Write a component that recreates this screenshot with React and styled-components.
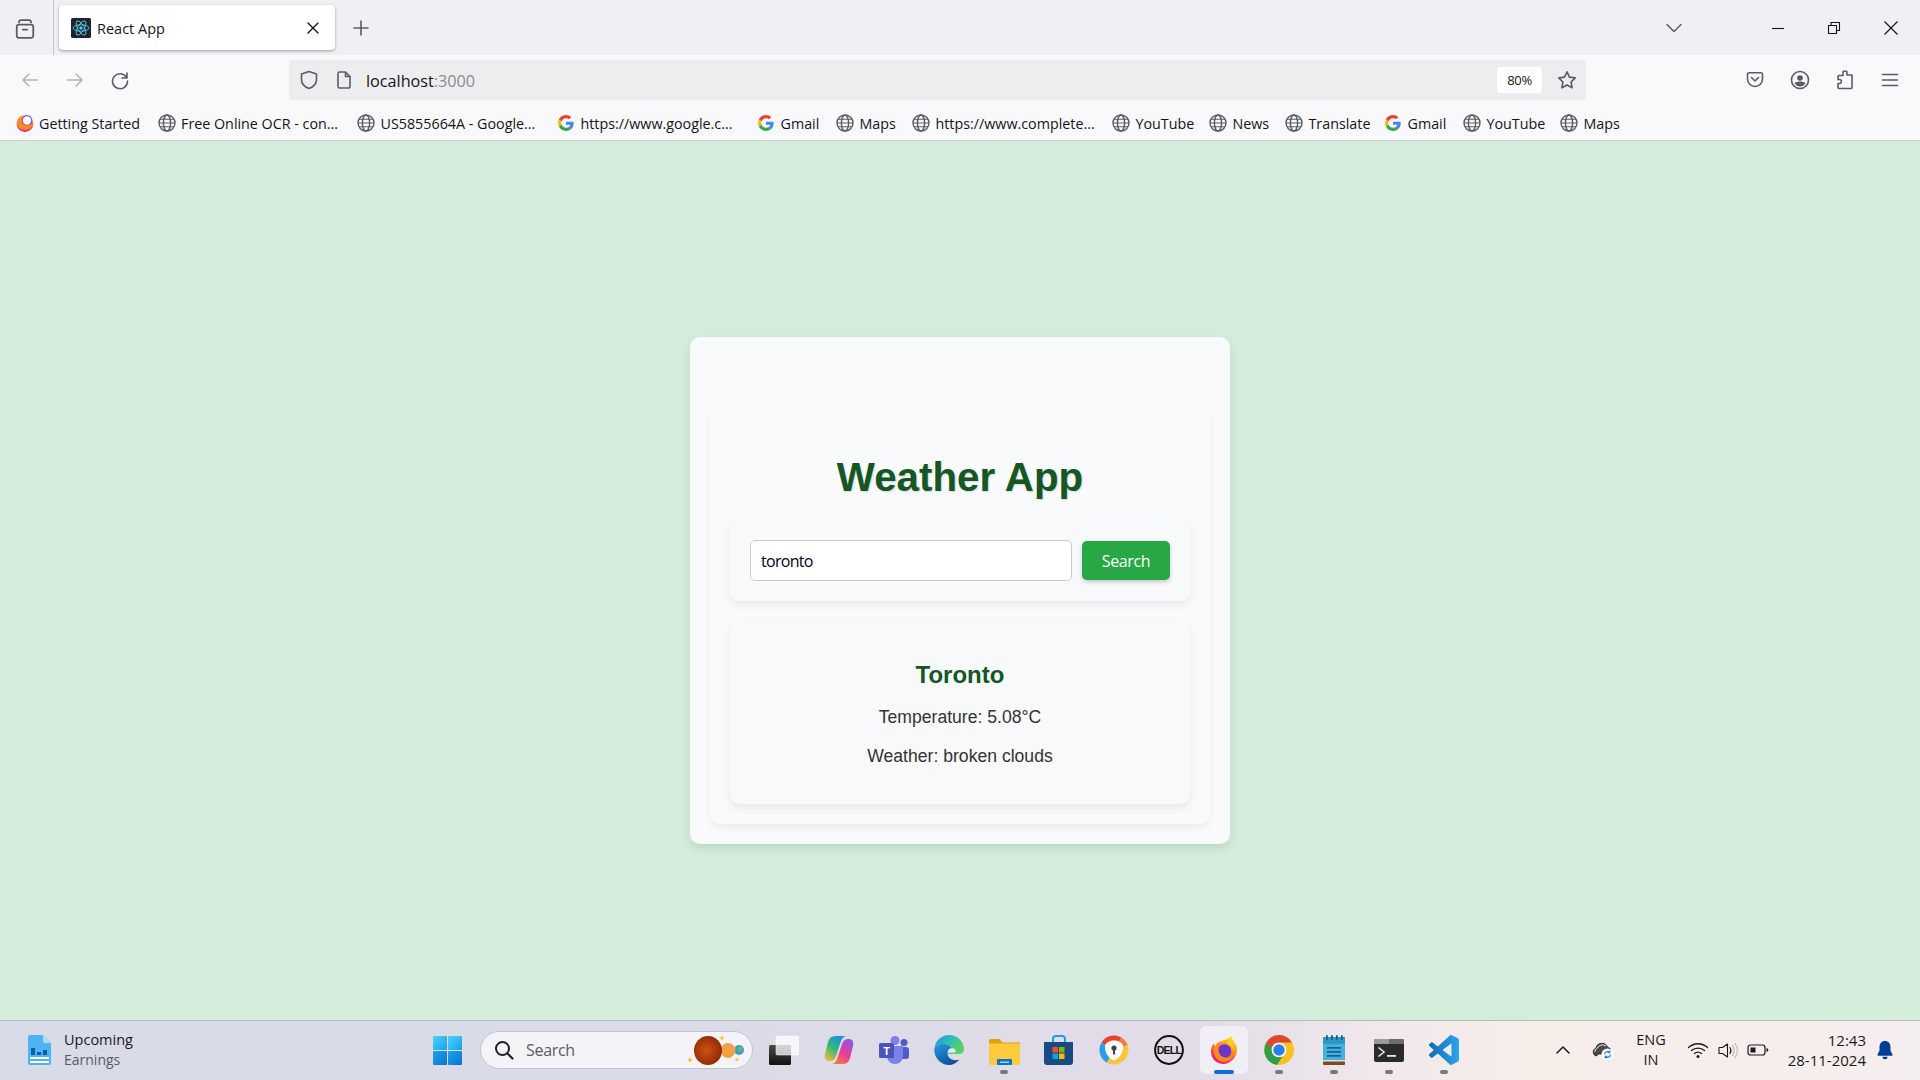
import React from "react";
import styled, { createGlobalStyle } from "styled-components";

const UI = `"Open Sans", "Noto Sans", sans-serif`;
const ARIAL = `"Liberation Sans", Arial, sans-serif`;

const Global = createGlobalStyle`
  html, body { margin: 0; padding: 0; height: 100%; overflow: hidden; }
  #root { height: 100%; }
  * { box-sizing: border-box; }
`;

const Screen = styled.div`
  width: 1920px; height: 1080px; display: flex; flex-direction: column;
  background: #d4edda; font-family: ${UI}; overflow: hidden;
`;
const TabStrip = styled.div`
  height: 55px; flex: none; display: flex; align-items: stretch; background: #f0f0f4;
`;
const TabsButton = styled.div`
  width: 54px; display: flex; align-items: center; justify-content: center;
  border-right: 1px solid #c6c6cc; padding: 2px 4px 0 0;
`;
const Tab = styled.div`
  width: 276px; height: 45px; margin: 5px 0 0 5px; padding: 1px 15px 0 12px;
  display: flex; align-items: center; background: #fff; border-radius: 4px;
  box-shadow: 0 1px 3px rgba(0,0,0,.35);
`;
const TabTitle = styled.span`
  flex: 1; margin-left: 6px; font-size: 14.5px; letter-spacing: 0; color: #15141a;
`;
const Slot = styled.div`
  width: ${p => p.$w}px; flex: none; display: flex; align-items: center; justify-content: center;
`;
const StripSlot = styled(Slot)` padding-top: 1px; `;
const Spacer = styled.div` flex: 1; `;
const NavBar = styled.div`
  height: 45px; flex: none; padding: 5px 7.5px 0; display: flex; align-items: flex-start; background: #f9f9fb;
`;
const NavSlot = styled(Slot)` height: 40px; `;
const UrlBar = styled.div`
  width: 1297px; height: 40px; flex: none; margin-left: 146.5px; padding: 0 9px 0 10px;
  background: #ededf0; border-radius: 4px; display: flex; align-items: center;
`;
const UrlText = styled.div`
  flex: 1; margin-left: 14px; font-size: 16.2px; letter-spacing: 0; color: #15141a; padding-top: 2px;
  span { color: #8a8a90; }
`;
const ZoomBadge = styled.div`
  width: 45px; height: 26px; background: #fff; border-radius: 3px; margin-right: 15px;
  display: flex; align-items: center; justify-content: center; font-size: 13px; letter-spacing: -0.3px; color: #15141a;
`;
const Bookmarks = styled.div`
  height: 41px; flex: none; padding: 6px 0 0 15.5px; display: flex; align-items: center;
  background: #f9f9fb; border-bottom: 1px solid #c9cbc9;
`;
const Bookmark = styled.div`
  width: ${p => p.$w}px; flex: none; display: flex; align-items: center; gap: 5.5px;
  font-size: 14.3px; letter-spacing: 0; color: #15141a; white-space: nowrap;
`;
const Main = styled.main`
  flex: 1; display: flex; align-items: center; justify-content: center; padding-top: 20px; background: #d4edda;
`;
const Outer = styled.div`
  width: 540px; padding: 70px 20px 20px; background: #f9fafc; border-radius: 10px;
  box-shadow: 0 4px 8px rgba(0,0,0,.1);
`;
const Inner = styled.div`
  padding: 20px; background: #f9fafc; border-radius: 10px; box-shadow: 0 4px 8px rgba(0,0,0,.06);
`;
const Title = styled.h1`
  margin: 28px 0 19px; text-align: center; font: bold 40.3px/46px ${ARIAL}; color: #155724;
  text-shadow: 1px 1px 2px rgba(0,0,0,.15);
`;
const SearchBox = styled.form`
  height: 81px; padding: 20px; display: flex; align-items: center; gap: 10px;
  background: #f8f9fb; border-radius: 10px; box-shadow: 0 4px 8px rgba(0,0,0,.07);
`;
const CityInput = styled.input`
  width: 322px; height: 41px; padding: 0 10px; border: 1px solid #ccc; border-radius: 5px;
  background: #fff; font: 16px ${UI}; letter-spacing: -0.7px; color: #00001a; outline: none;
`;
const SearchButton = styled.button`
  width: 88px; height: 39px; border: 0; border-radius: 5px; background: #28a745; color: #fff;
  font: 16px ${UI}; letter-spacing: -0.35px; box-shadow: 0 2px 4px rgba(0,0,0,.2); padding: 0;
`;
const Result = styled.section`
  height: 183px; margin-top: 20px; padding-top: 40px; text-align: center;
  background: #f8f9fb; border-radius: 10px; box-shadow: 0 4px 8px rgba(0,0,0,.08);
`;
const City = styled.h2`
  margin: 0 0 18px; font: bold 24px/28px ${ARIAL}; color: #155724;
`;
const Reading = styled.p`
  margin: 0 0 18px; font: 17.6px/21px ${ARIAL}; color: #333;
`;
const Taskbar = styled.footer`
  height: 60px; flex: none; padding-bottom: 1px; display: flex; align-items: center; border-top: 1px solid #b8b8c2;
  background: linear-gradient(90deg, #d9dbe8 0%, #dadbe8 35%, #e2dce8 62%, #f0e8ea 72%, #f7eeea 80%, #f5eeee 100%);
`;
const Widget = styled.div`
  width: 433px; flex: none; padding-left: 28px; display: flex; align-items: center; gap: 13px;
`;
const WidgetText = styled.div`
  display: flex; flex-direction: column; font-size: 14.5px; line-height: 20px; color: #1a1a1a;
  small { font-size: 14px; color: #5a5a60; }
`;
const SearchPill = styled.div`
  width: 273px; height: 38px; margin: 0 3.5px 0 18px; flex: none; padding: 0 8px 0 13px; display: flex; align-items: center;
  background: #f3f3f8; border: 1px solid #c4c4cf; border-radius: 19px; font-size: 16px; letter-spacing: -0.3px; color: #5c5c60;
`;
const PillLabel = styled.span` flex: 1; margin-left: 12px; `;
const AppCell = styled.div`
  position: relative; width: 55px; height: 58px; flex: none; display: flex; align-items: center; justify-content: center;
  &::before {
    content: ""; position: absolute; left: 3.5px; right: 3.5px; top: 5px; bottom: 5px; border-radius: 5px;
    background: ${p => (p.$active ? "#f1eff6" : "transparent")};
    box-shadow: ${p => (p.$active ? "0 0 1px rgba(0,0,0,.15)" : "none")};
  }
  svg { position: relative; }
  &::after {
    content: ""; position: absolute; bottom: 5px; left: 50%; transform: translateX(-50%); height: 4px; border-radius: 2px;
    width: ${p => (p.$active ? 20 : p.$open ? 8 : 0)}px;
    background: ${p => (p.$active ? "#0f6cd8" : "#77777d")};
  }
`;
const Tray = styled.div`
  margin-left: auto; padding-right: 16px; display: flex; align-items: center; color: #1a1a1a;
`;
const Lang = styled.div`
  width: 56px; margin-right: 4px; text-align: center; font-size: 14.5px; line-height: 20px; flex: none;
`;
const Clock = styled.div`
  width: 93px; flex: none; text-align: right; font-size: 15px; line-height: 20px; white-space: nowrap;
`;

const I = ({ s = 20, w, h, vb = "0 0 20 20", children, ...r }) => (
  <svg width={w ?? s} height={h ?? s} viewBox={vb} fill="none" {...r}>{children}</svg>
);
const ST = { stroke: "#5b5b66", strokeWidth: 1.6, strokeLinecap: "round", strokeLinejoin: "round" };

const Globe = () => (
  <I s={18} vb="0 0 18 18" style={{ flex: "none" }}>
    <g stroke="#5b5b66" strokeWidth="1.4">
      <circle cx="9" cy="9" r="8" />
      <ellipse cx="9" cy="9" rx="3.6" ry="8" />
      <path d="M1 9h16M2 5.2h14M2 12.8h14" strokeWidth="1.1" />
    </g>
  </I>
);
const G = ({ s = 16 }) => (
  <span style={{ width: 18, display: "flex", justifyContent: "center", flex: "none" }}>
    <svg width={s} height={s} viewBox="0 0 48 48">
      <path fill="#EA4335" d="M24 9.5c3.54 0 6.71 1.22 9.21 3.6l6.85-6.85C35.9 2.38 30.47 0 24 0 14.62 0 6.51 5.38 2.56 13.22l7.98 6.19C12.43 13.72 17.74 9.5 24 9.5z" />
      <path fill="#4285F4" d="M46.98 24.55c0-1.57-.15-3.09-.38-4.55H24v9.02h12.94c-.58 2.96-2.26 5.48-4.78 7.18l7.73 6c4.51-4.18 7.09-10.36 7.09-17.65z" />
      <path fill="#FBBC05" d="M10.53 28.59c-.48-1.45-.76-2.99-.76-4.59s.27-3.14.76-4.59l-7.98-6.19C.92 16.46 0 20.12 0 24c0 3.88.92 7.54 2.56 10.78l7.97-6.19z" />
      <path fill="#34A853" d="M24 48c6.48 0 11.93-2.13 15.89-5.81l-7.73-6c-2.15 1.45-4.92 2.3-8.16 2.3-6.26 0-11.57-4.22-13.47-9.91l-7.98 6.19C6.51 42.62 14.62 48 24 48z" />
    </svg>
  </span>
);
const FoxSmall = () => (
  <I s={18} vb="0 0 18 18" style={{ flex: "none" }}>
    <defs>
      <linearGradient id="fs" x1=".7" y1="0" x2=".3" y2="1">
        <stop offset="0" stopColor="#ffb21f" /><stop offset=".55" stopColor="#ff5a3c" /><stop offset="1" stopColor="#e3157f" />
      </linearGradient>
    </defs>
    <circle cx="9" cy="9.600" r="8.400" fill="url(#fs)" />
    <circle cx="11" cy="6.500" r="4.800" fill="#fff" stroke="#8a4be0" strokeWidth="1.200" />
    <path fill="#ff8a1f" d="M1 8c1-3 3.500-5 6-5-1 1.500-1.500 3-1 5 .6 2 2.500 3.500 5 3.500 2 0 4-1 5.500-2.500-.8 4.500-4 7-7.500 7C4 16 .5 12.500 1 8z" />
  </I>
);
const Fox = ({ s = 30, id = "fx" }) => (
  <svg width={s} height={s} viewBox="0 0 30 30" style={{ flex: "none" }}>
    <defs>
      <linearGradient id={id} x1="0.7" y1="0" x2="0.2" y2="1">
        <stop offset="0" stopColor="#ffe226" /><stop offset="0.4" stopColor="#ff8a1f" /><stop offset="0.8" stopColor="#f5256a" /><stop offset="1" stopColor="#e31587" />
      </linearGradient>
    </defs>
    <path fill={`url(#${id})`} d="M22 1c1 3 4 6 5.4 10 1.2 3.800.6 8-1.800 11.600-2.500 3.600-6.400 6.400-11 6.400C7.600 29 2 23.500 2 16.500 2 13 3.200 10 5 8c0 1.500.5 2.500 1.300 3.300C7 9 8.800 7.300 11 6.500 14 5.400 18.500 5 22 1z" />
    <circle cx="15.500" cy="16" r="6.800" fill="#6d34c9" />
    <path fill="#ff8a1f" d="M4 13c2-3 6-5 10-4.500-2.500 1-4.200 2.500-4.500 5C9 18 12 22.500 17 22.700c3.500.1 6.500-2 7.500-5-.3 5-4.300 9.300-10 9.300C8.500 27 3.600 20 4 13z" />
    <path fill="#ffd426" d="M20.500 5c2.500 2.300 4.500 6 3.800 10.500-.8-3.500-3-6-6.500-7.800 1.500-.4 2.300-1.300 2.700-2.700z" />
  </svg>
);

const React_ = () => (
  <I s={20} vb="0 0 20 20" style={{ flex: "none" }}>
    <rect width="20" height="20" rx="1.500" fill="#20232a" />
    <g stroke="#61dafb" strokeWidth=".8" fill="none">
      <ellipse cx="10" cy="10" rx="8" ry="3.200" />
      <ellipse cx="10" cy="10" rx="8" ry="3.200" transform="rotate(60 10 10)" />
      <ellipse cx="10" cy="10" rx="8" ry="3.200" transform="rotate(120 10 10)" />
    </g>
    <circle cx="10" cy="10" r="1.600" fill="#61dafb" />
  </I>
);

const TaskView = () => (
  <I s={30} vb="0 0 30 30">
    <defs>
      <linearGradient id="tv" x1="0" y1="0" x2="0" y2="1"><stop offset="0" stopColor="#4a4a4a" /><stop offset="1" stopColor="#111" /></linearGradient>
    </defs>
    <rect x="0" y="10" width="22" height="20" rx="1.500" fill="url(#tv)" />
    <rect x="7" y="1" width="23" height="19" rx="1.500" fill="#fff" fillOpacity=".75" stroke="#fff" strokeOpacity=".5" />
  </I>
);
const Copilot = () => (
  <I s={30} vb="0 0 30 30">
    <defs>
      <linearGradient id="c1" x1=".8" y1="0" x2=".1" y2="1"><stop offset="0" stopColor="#1f86f0" /><stop offset=".5" stopColor="#2fb87a" /><stop offset="1" stopColor="#f3bd2c" /></linearGradient>
      <linearGradient id="c2" x1=".8" y1="0" x2=".2" y2="1"><stop offset="0" stopColor="#8f55e6" /><stop offset=".55" stopColor="#e93f95" /><stop offset="1" stopColor="#f9802a" /></linearGradient>
    </defs>
    <path fill="url(#c2)" d="M19.500 29H7c3 0 5-2 6-5l5-15c1-3 3-5 7-5 3.500 0 5 3 4 7l-3 12c-1 4-3.500 6-7.500 6z" />
    <path fill="url(#c1)" d="M10.500 1H23c-3 0-5 2-6 5l-5 15c-1 3-3 5-7 5-3.500 0-5-3-4-7l3-12c1-4 3.500-6 7.500-6z" />
  </I>
);
const Teams = () => (
  <I s={30} vb="0 0 30 30">
    <circle cx="25" cy="7.500" r="3.500" fill="#5059c9" />
    <rect x="20" y="12" width="10" height="12" rx="3" fill="#5059c9" />
    <circle cx="16" cy="5.500" r="4.500" fill="#7b83eb" />
    <path fill="#7b83eb" d="M8 11h16v10c0 4.500-3.500 8-8 8s-8-3.500-8-8z" />
    <rect x="0" y="8" width="15" height="15" rx="1.500" fill="#4b53bc" />
    <text x="7.500" y="19.500" textAnchor="middle" fill="#fff" fontFamily={ARIAL} fontWeight="700" fontSize="11">T</text>
  </I>
);
const Edge = () => (
  <I s={30} vb="0 0 30 30">
    <defs>
      <linearGradient id="e1" x1=".1" y1=".1" x2="1" y2=".7"><stop offset="0" stopColor="#1b9de2" /><stop offset=".5" stopColor="#35c1a8" /><stop offset="1" stopColor="#5fd35a" /></linearGradient>
      <linearGradient id="e2" x1="0" y1="0" x2=".6" y2="1"><stop offset="0" stopColor="#2b9be0" /><stop offset="1" stopColor="#0b4f9c" /></linearGradient>
    </defs>
    <path fill="url(#e1)" d="M15 0c8.500 0 15 6.500 15 14.500 0 3-2 4.500-5 4.500H13.500c-.5-3 1-5.500 4-6C13 7 4 8 .5 13 1.500 5.500 7.500 0 15 0z" />
    <path fill="url(#e2)" d="M.5 13C4 8 13 7 17.500 13c-3 .5-4.500 3-4 6 .8 5 6.500 7.500 12 5.500-3 3.500-6.500 5.500-10.500 5.500C7 30-1 22 .5 13z" />
    <path fill="#e4e8f2" d="M14.300 15.500c.8-1.800 3.700-2.700 6-1.800 1.600.7 2 2.200 1 3.200-.8.700-2 .9-3.800.9h-3.700c-.1-.8.100-1.500.5-2.300z" />
  </I>
);
const Files = () => (
  <I s={31} vb="0 0 31 31">
    <path fill="#dda30c" d="M0 5.500C0 4.700.7 4 1.500 4h9l3 3.500H31v4H0z" />
    <path fill="#ffcb3d" d="M0 8.500h31V28a2 2 0 0 1-2 2H2a2 2 0 0 1-2-2z" />
    <rect x="8" y="24" width="15" height="6" rx="1" fill="#0a76c8" />
    <rect x="11" y="26.500" width="9" height="1.500" fill="#9fd3f7" />
  </I>
);
const Store = () => (
  <I s={30} vb="0 0 30 30">
    <path d="M9 8V4a3 3 0 0 1 3-3h6a3 3 0 0 1 3 3v4" stroke="#1ba0e2" strokeWidth="2" />
    <path fill="#1a4a83" d="M0 7h29v20a3 3 0 0 1-3 3H3a3 3 0 0 1-3-3z" />
    <rect x="8.500" y="12" width="5.500" height="5.500" fill="#f25022" />
    <rect x="15" y="12" width="5.500" height="5.500" fill="#7fba00" />
    <rect x="8.500" y="18.500" width="5.500" height="5.500" fill="#00a4ef" />
    <rect x="15" y="18.500" width="5.500" height="5.500" fill="#ffb900" />
  </I>
);
const Shield2 = () => (
  <I s={30} vb="0 0 30 30">
    <circle cx="15" cy="15" r="11.500" stroke="#f8c53e" strokeWidth="6" />
    <path d="M5.040 9.250A11.500 11.500 0 0 1 20.750 5.040" stroke="#e8402f" strokeWidth="6" />
    <path d="M9.250 24.960A11.500 11.500 0 0 1 5.040 9.250" stroke="#2a9bef" strokeWidth="6" />
    <path d="M20.750 5.040A11.500 11.500 0 0 1 25.700 11" stroke="#ee7d4a" strokeWidth="6" />
    <path fill="#fff" d="M15 5.500c4 0 8 2 9 5 .5 6-3.500 13-9 15-5.500-2-9.500-9-9-15 1-3 5-5 9-5z" />
    <circle cx="15" cy="13" r="2.600" fill="#3d4350" />
    <rect x="14" y="13.500" width="2" height="6" fill="#3d4350" />
  </I>
);
const Dell = () => (
  <I s={30} vb="0 0 30 30">
    <circle cx="15" cy="15" r="13.900" fill="none" stroke="#111" strokeWidth="2" />
    <text x="15" y="18.700" textAnchor="middle" fontFamily={ARIAL} fontWeight="700" fontSize="10.500" letterSpacing="-.7" fill="#111">DELL</text>
  </I>
);
const Chrome = () => (
  <I s={30} vb="0 0 30 30">
    <circle cx="15" cy="15" r="15" fill="#f9c220" />
    <path fill="#dd4535" d="M15 0a15 15 0 0 1 13 7.500H15a7.500 7.500 0 0 0-7.200 5.300L2.200 7.800A15 15 0 0 1 15 0z" />
    <path fill="#2e9f49" d="M2.200 7.800A15 15 0 0 0 13 29.900l5.500-8.700a7.500 7.500 0 0 1-10.700-8.400z" />
    <circle cx="15" cy="15" r="7.300" fill="#fff" />
    <circle cx="15" cy="15" r="5.700" fill="#2f7de8" />
  </I>
);
const Notepad = () => (
  <I w={22} h={30} vb="0 0 22 30">
    <rect x="0" y="2" width="22" height="26" rx="1" fill="#45b0dd" />
    <rect x="0" y="2" width="22" height="7" fill="#2f96c8" />
    <rect x="0" y="26" width="22" height="4" rx="1" fill="#7b4a2c" />
    <rect x="0" y="25" width="22" height="1.500" fill="#e9e0d0" />
    {[3, 8, 13, 18].map(x => <rect key={x} x={x} y="0" width="1.800" height="5" rx=".9" fill="#12608c" />)}
    {[12, 16, 20].map(y => <rect key={y} x="4" y={y} width="14" height="1.700" fill="#14638f" />)}
  </I>
);
const Terminal = () => (
  <I w={30} h={23} vb="0 0 30 23">
    <rect width="30" height="23" rx="2" fill="#2b2b2b" />
    <path d="M0 2a2 2 0 0 1 2-2h13v5H0z" fill="#9a9a9a" />
    <path d="M15 0h13a2 2 0 0 1 2 2v3H15z" fill="#6d6d6d" />
    <path d="M4.500 8.500l5.500 4.500-5.500 4.500" stroke="#e6e6e6" strokeWidth="1.600" fill="none" />
    <rect x="13" y="16" width="9" height="1.800" fill="#e6e6e6" />
  </I>
);
const VSCode = () => (
  <I s={30} vb="0 0 100 100">
    <defs><linearGradient id="vs" x1="0" y1="0" x2="1" y2="0"><stop offset="0" stopColor="#0e6db4" /><stop offset="1" stopColor="#2aa5ee" /></linearGradient></defs>
    <path fillRule="evenodd" fill="url(#vs)" d="M96.400 10.800 75.800.9a6.200 6.200 0 0 0-7.100 1.200L29.400 38 12.200 25a4.200 4.200 0 0 0-5.300.2l-5.500 5a4.200 4.200 0 0 0 0 6.200L16.200 50 1.400 63.600a4.200 4.200 0 0 0 0 6.200l5.500 5a4.200 4.200 0 0 0 5.300.2l17.200-13 39.300 35.900a6.200 6.200 0 0 0 7.100 1.200l20.600-9.900a6.200 6.200 0 0 0 3.500-5.600V16.400a6.200 6.200 0 0 0-3.500-5.600zM75 72.700 45.200 50 75 27.300z" />
  </I>
);
const WinLogo = () => (
  <I s={29} vb="0 0 29 29" style={{ flex: "none" }}>
    <defs>
      <linearGradient id="w1" x1="0" y1="0" x2="1" y2="1"><stop offset="0" stopColor="#4dd3f7" /><stop offset="1" stopColor="#18a0e8" /></linearGradient>
      <linearGradient id="w2" x1="0" y1="0" x2="1" y2="1"><stop offset="0" stopColor="#1ea4e8" /><stop offset="1" stopColor="#0a72d4" /></linearGradient>
    </defs>
    <rect x="0" y="0" width="14" height="14" rx="1" fill="url(#w1)" />
    <rect x="15" y="0" width="14" height="14" rx="1" fill="url(#w1)" />
    <rect x="0" y="15" width="14" height="14" rx="1" fill="url(#w2)" />
    <rect x="15" y="15" width="14" height="14" rx="1" fill="url(#w2)" />
  </I>
);

const bookmarks = [
  [142, "Getting Started", "fox"], [199.5, "Free Online OCR - con..."], [200, "US5855664A - Google..."],
  [200, "https://www.google.c...", "g"], [79, "Gmail", "g"], [76, "Maps"], [200, "https://www.complete..."],
  [97, "YouTube"], [76, "News"], [99, "Translate"], [79, "Gmail", "g"], [97, "YouTube"], [60, "Maps"],
];
const apps = [
  [TaskView], [Copilot], [Teams], [Edge], [Files, "open"], [Store], [Shield2], [Dell],
  [() => <Fox s={30} id="fx2" />, "active"], [Chrome, "open"], [Notepad, "open"], [Terminal, "open"], [VSCode, "open"],
];

export default function App() {
  return (
    <Screen>
      <Global />
      <TabStrip>
        <TabsButton>
          <I s={22} vb="0 0 20 20"><path {...ST} d="M4.500 4c0-1.100.8-2 2-2h7c1.200 0 2 .9 2 2" /><rect x="2.500" y="6" width="15" height="12" rx="2" {...ST} /><path {...ST} d="M8 10.500h4" /></I>
        </TabsButton>
        <Tab>
          <React_ />
          <TabTitle>React App</TabTitle>
          <I s={14} vb="0 0 14 14"><path d="M2 2l10 10M12 2L2 12" stroke="#15141a" strokeWidth="1.400" strokeLinecap="round" /></I>
        </Tab>
        <StripSlot $w={52}>
          <I s={18} vb="0 0 18 18"><path d="M9 2v14M2 9h14" stroke="#5b5b66" strokeWidth="1.600" strokeLinecap="round" /></I>
        </StripSlot>
        <Spacer />
        <StripSlot $w={48} style={{ marginRight: 52 }}>
          <I s={18} vb="0 0 18 18"><path d="M2 5.500l7 7 7-7" stroke="#5b5b66" strokeWidth="1.500" strokeLinecap="round" strokeLinejoin="round" /></I>
        </StripSlot>
        <Slot $w={56}><I s={14} vb="0 0 14 14"><path d="M1 7.500h12" stroke="#15141a" strokeWidth="1.100" /></I></Slot>
        <Slot $w={56}><I s={14} vb="0 0 14 14"><path d="M1.500 4.500h8v8h-8zM4 4.500V1.500h8.500v8H9.500" stroke="#15141a" strokeWidth="1.100" /></I></Slot>
        <Slot $w={58}><I s={16} vb="0 0 16 16"><path d="M1.500 1.500l13 13M14.500 1.500l-13 13" stroke="#15141a" strokeWidth="1.200" /></I></Slot>
      </TabStrip>

      <NavBar>
        <NavSlot $w={45}><I s={20}><path d="M17.500 10h-14M9 4l-6 6 6 6" stroke="#b3b3b8" strokeWidth="1.600" strokeLinecap="round" strokeLinejoin="round" /></I></NavSlot>
        <NavSlot $w={45}><I s={20}><path d="M2.500 10h14M11 4l6 6-6 6" stroke="#b3b3b8" strokeWidth="1.600" strokeLinecap="round" strokeLinejoin="round" /></I></NavSlot>
        <NavSlot $w={45}><I s={20}><path {...ST} d="M17 3v5h-5M16.500 7.500A7.500 7.500 0 1 0 17.500 11" /></I></NavSlot>
        <UrlBar>
          <I s={20} style={{ flex: "none" }}><path {...ST} d="M10 1.500l7.500 2.500v5.500c0 4.500-3.200 7.500-7.500 9-4.300-1.500-7.500-4.500-7.500-9V4z" /></I>
          <I w={16} h={20} vb="0 0 16 20" style={{ flex: "none", marginLeft: 17 }}><path {...ST} d="M3 2h6.500L14 6.500V16.500A1.500 1.500 0 0 1 12.500 18h-9A1.500 1.500 0 0 1 2 16.500V3.500A1.500 1.500 0 0 1 3.500 2zM9.500 2v4.500H14" /></I>
          <UrlText>localhost<span>:3000</span></UrlText>
          <ZoomBadge>80%</ZoomBadge>
          <I s={20} style={{ flex: "none" }}><path {...ST} d="M10 1.800l2.500 5.300 5.700.8-4.100 4.100 1 5.800-5.100-2.800-5.100 2.800 1-5.800-4.100-4.100 5.700-.8z" /></I>
        </UrlBar>
        <Spacer />
        <NavSlot $w={45}><I s={20}><path {...ST} d="M2.500 4.500c0-1 .8-1.800 1.800-1.800h11.400c1 0 1.800.8 1.800 1.800V9a7.500 7.500 0 0 1-15 0zM6.500 7.500L10 11l3.500-3.500" /></I></NavSlot>
        <NavSlot $w={45}><I s={20}><circle cx="10" cy="10" r="8.500" {...ST} /><circle cx="10" cy="8" r="2.800" fill="#5b5b66" /><path fill="#5b5b66" d="M4.500 13c1.500-1 3.500-1.500 5.500-1.500s4 .5 5.500 1.500c-1 2-3 3.500-5.500 3.500S5.500 15 4.500 13z" /></I></NavSlot>
        <NavSlot $w={45}><I s={20}><path {...ST} d="M8 2.500c0-1 1-1.500 2-1.500s2 .5 2 1.500V5h5v12.500a1 1 0 0 1-1 1H4a1 1 0 0 1-1-1v-4h1.500c2.500 0 2.500-4 0-4H3V6.500a1 1 0 0 1 1-1h4z" /></I></NavSlot>
        <NavSlot $w={45}><I s={20}><path d="M2.500 4.500h15M2.500 10h15M2.500 15.500h15" stroke="#5b5b66" strokeWidth="1.500" strokeLinecap="round" /></I></NavSlot>
      </NavBar>

      <Bookmarks>
        {bookmarks.map(([w, label, kind], i) => (
          <Bookmark key={i} $w={w}>
            {kind === "fox" ? <FoxSmall /> : kind === "g" ? <G /> : <Globe />}
            {label}
          </Bookmark>
        ))}
      </Bookmarks>

      <Main>
        <Outer>
          <Inner>
            <Title>Weather App</Title>
            <SearchBox onSubmit={e => e.preventDefault()}>
              <CityInput defaultValue="toronto" />
              <SearchButton>Search</SearchButton>
            </SearchBox>
            <Result>
              <City>Toronto</City>
              <Reading>Temperature: 5.08°C</Reading>
              <Reading>Weather: broken clouds</Reading>
            </Result>
          </Inner>
        </Outer>
      </Main>

      <Taskbar>
        <Widget>
          <I w={23} h={30} vb="0 0 23 30" style={{ flex: "none" }}>
            <path fill="#4fb3ef" d="M2 0h13l8 8v20a2 2 0 0 1-2 2H2a2 2 0 0 1-2-2V2a2 2 0 0 1 2-2z" />
            <path fill="#a9dcf9" d="M15 0l8 8h-6a2 2 0 0 1-2-2z" />
            <rect x="3" y="13" width="4" height="7" fill="#0d5fa8" /><rect x="9" y="17" width="4" height="3" fill="#0d5fa8" /><rect x="15" y="15" width="4" height="5" fill="#0d5fa8" />
            <rect x="2" y="22" width="19" height="2" fill="#fff" /><rect x="2" y="26" width="19" height="2" fill="#fff" />
          </I>
          <WidgetText>Upcoming<small>Earnings</small></WidgetText>
        </Widget>
        <WinLogo />
        <SearchPill>
          <I s={20} style={{ flex: "none" }}><circle cx="8.500" cy="8.500" r="6.500" stroke="#222" strokeWidth="2" /><path d="M13.500 13.500l5 5" stroke="#222" strokeWidth="2.200" strokeLinecap="round" /></I>
          <PillLabel>Search</PillLabel>
          <I w={56} h={34} vb="0 0 56 34" style={{ flex: "none" }}>
            <defs><radialGradient id="pl" cx=".45" cy=".5" r=".6"><stop offset="0" stopColor="#d0500f" /><stop offset="1" stopColor="#862807" /></radialGradient></defs>
            <circle cx="51" cy="17" r="5" fill="#3f9fc8" />
            <circle cx="52" cy="16" r="2.400" fill="#63b86b" />
            <circle cx="40" cy="17.500" r="7.500" fill="#f3a045" />
            <ellipse cx="20" cy="17.500" rx="14" ry="14.500" fill="url(#pl)" />
            <path d="M2 24l.9 2.100 2.100.9-2.100.9L2 30l-.9-2.100-2.100-.9 2.100-.9zM34 2l.8 2.200 2.200.8-2.200.8L34 8l-.8-2.200-2.200-.8 2.200-.8zM49 24l.7 1.800 1.800.7-1.800.7L49 29l-.7-1.800-1.800-.7 1.800-.7z" fill="#f2c230" />
          </I>
        </SearchPill>
        {apps.map(([Icon, state], i) => (
          <AppCell key={i} $active={state === "active"} $open={state === "open"}><Icon /></AppCell>
        ))}
        <Tray>
          <Slot $w={40}><I s={18} vb="0 0 18 18"><path d="M3 12l6-6 6 6" stroke="#1a1a1a" strokeWidth="1.500" strokeLinecap="round" strokeLinejoin="round" /></I></Slot>
          <Slot $w={40}>
            <I s={22} vb="0 0 22 22">
              <path d="M5 17a4 4 0 0 1-1-7.800 6 6 0 0 1 11.500-1 4.500 4.500 0 0 1 3.500 4.300V15H5z" fill="#4a4a4e" stroke="#2a2a2e" />
              <path d="M3 13a3 3 0 0 1 2-3.500 6 6 0 0 1 9-2.500" stroke="#eee" strokeWidth="1" fill="none" />
              <circle cx="15.500" cy="15.500" r="6" fill="#fff" />
              <path d="M12.500 15.500a3 3 0 0 1 5.200-2M18.500 15.500a3 3 0 0 1-5.200 2M17.700 11.500v2.200h-2.200M13.300 19.500v-2.200h2.200" stroke="#1b84d8" strokeWidth="1.200" fill="none" />
            </I>
          </Slot>
          <Lang>ENG<br />IN</Lang>
          <Slot $w={30}>
            <I s={22} vb="0 0 22 22"><path d="M1.500 8.500c5.500-5 13.500-5 19 0M4.500 11.500c3.800-3.300 9.200-3.300 13 0M7.500 14.500c2-1.600 5-1.600 7 0" stroke="#1a1a1a" strokeWidth="1.300" strokeLinecap="round" /><circle cx="11" cy="17.500" r="1.500" fill="#1a1a1a" /></I>
          </Slot>
          <Slot $w={30}>
            <I s={22} vb="0 0 22 22"><path d="M2 8.500h3.500L10.500 5v13l-5-3.500H2z" stroke="#1a1a1a" strokeWidth="1.100" strokeLinejoin="round" /><path d="M13 8.500c1.200 1.800 1.200 4.200 0 6" stroke="#1a1a1a" strokeWidth="1.100" strokeLinecap="round" /><path d="M15.500 6.500c2 3 2 7 0 10M18 4.500c3 4.200 3 9.800 0 14" stroke="#b5b0b0" strokeWidth="1.100" strokeLinecap="round" /></I>
          </Slot>
          <Slot $w={30}>
            <I s={22} vb="0 0 22 22"><rect x="1" y="6" width="17" height="10" rx="2.500" stroke="#1a1a1a" strokeWidth="1.200" /><rect x="3.500" y="8.500" width="5" height="5" fill="#1a1a1a" /><path d="M19.500 9v4c1-.2 1.800-1 1.800-2s-.8-1.800-1.800-2z" fill="#1a1a1a" /></I>
          </Slot>
          <Clock>12:43<br />28-11-2024</Clock>
          <Slot $w={38}>
            <I s={20} vb="0 0 20 20"><path fill="#003f98" d="M10 1c-3.500 0-5.500 2.700-5.500 6v3.500L2.500 14.500c-.3.700.1 1.200.8 1.200h13.400c.7 0 1.100-.5.800-1.200l-2-4V7c0-3.300-2-6-5.500-6z" /><path fill="#003f98" d="M7.500 16.800h5a2.500 2.500 0 0 1-5 0z" /></I>
          </Slot>
        </Tray>
      </Taskbar>
    </Screen>
  );
}
